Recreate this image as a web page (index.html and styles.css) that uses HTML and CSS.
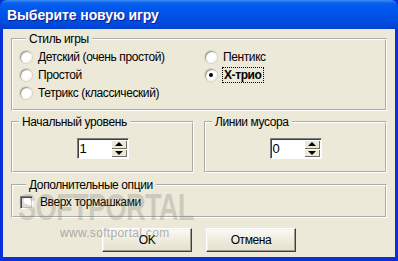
FILE: index.html
```html
<!DOCTYPE html>
<html lang="ru">
<head>
    <meta charset="UTF-8">
    <title>Выберите новую игру</title>
    <link rel="stylesheet" href="styles.css">
</head>
<body>
    <div class="window">
        <div class="titlebar">Выберите новую игру</div>
        <div class="client">
            <fieldset class="group style-group">
                <legend>Стиль игры</legend>
                <div class="styles">
                    <div class="col">
                        <div class="row"><span class="radio"></span>Детский (очень простой)</div>
                        <div class="row"><span class="radio"></span>Простой</div>
                        <div class="row"><span class="radio"></span>Тетрикс (классический)</div>
                    </div>
                    <div class="col">
                        <div class="row"><span class="radio"></span>Пентикс</div>
                        <div class="row"><span class="radio checked"></span><span class="focus">X-трио</span></div>
                    </div>
                </div>
            </fieldset>

            <div class="levels">
                <fieldset class="group level">
                    <legend>Начальный уровень</legend>
                    <div class="spin">
                        <span class="spin-value">1</span>
                        <span class="spin-btns">
                            <span class="spin-btn"><span class="arrow up"></span></span>
                            <span class="spin-btn"><span class="arrow down"></span></span>
                        </span>
                    </div>
                </fieldset>
                <fieldset class="group level">
                    <legend>Линии мусора</legend>
                    <div class="spin">
                        <span class="spin-value">0</span>
                        <span class="spin-btns">
                            <span class="spin-btn"><span class="arrow up"></span></span>
                            <span class="spin-btn"><span class="arrow down"></span></span>
                        </span>
                    </div>
                </fieldset>
            </div>

            <fieldset class="group options">
                <legend>Дополнительные опции</legend>
                <div class="row"><span class="checkbox"></span>Вверх тормашками</div>
            </fieldset>

            <div class="buttons">
                <button class="btn">OK</button>
                <button class="btn">Отмена</button>
            </div>
        </div>

        <!-- watermark from the screenshot -->
        <div class="watermark">
            <div class="wm-logo">SOFTPORTAL</div>
            <div class="wm-url">www.softportal.com</div>
        </div>
    </div>
</body>
</html>
```

FILE: styles.css
```css
body {
    margin: 0;
    font-family: "Liberation Sans", Arial, sans-serif;
    font-size: 12px;
    letter-spacing: -0.4px;
    color: #000;
}
.window {
    position: relative;
    width: 398px;
    height: 261px;
    box-sizing: border-box;
    display: flex;
    flex-direction: column;
    background: #0831d9;
    overflow: hidden;
}
.titlebar {
    height: 29px;
    flex: none;
    padding-left: 7px;
    font-size: 14px;
    font-weight: bold;
    letter-spacing: -0.1px;
    line-height: 31px;
    color: #fff;
    text-shadow: 1px 1px 0 #0a1f8f;
    background: linear-gradient(to bottom, #3d8ef7 0, #0a61ea 3px, #0058ee 7px, #0053e8 50%, #0049dc 85%, #003fcd 100%);
    border-radius: 7px 7px 0 0;
}
.client {
    flex: 1;
    margin: 0 3px 4px 3px;
    padding: 3px 8px 0 8px;
    background-color: #ece9d8;
    display: flex;
    flex-direction: column;
}
.group {
    margin: 0;
    padding: 0;
    min-width: 0;
    border: 2px groove #fff;
}
.group legend {
    margin-left: 6px;
    padding: 0 3px;
    line-height: 14px;
}
.style-group {
    padding: 2px 0 7px 7px;
}
.styles {
    display: flex;
}
.col:first-child {
    width: 185px;
}
.row {
    height: 18px;
    display: flex;
    align-items: center;
}
.radio {
    width: 12px;
    height: 12px;
    margin-right: 6px;
    border-radius: 50%;
    background: radial-gradient(circle at 60% 60%, #fff 40%, #e6e4dc 100%);
    box-shadow: inset 1px 1px 0 #9c9a92, inset -1px -1px 0 #f4f3ee, 0 0 0 1px #d6d3c6;
    display: flex;
    align-items: center;
    justify-content: center;
}
.radio.checked::after {
    content: "";
    width: 4px;
    height: 4px;
    border-radius: 50%;
    background: #000;
}
.focus {
    font-weight: bold;
    padding: 0 1px;
    outline: 1px dotted #000;
    line-height: 14px;
}
.levels {
    display: flex;
    gap: 10px;
    margin-top: 4px;
}
.level {
    flex: 1;
    padding: 9px 0 12px 0;
    display: flex;
    justify-content: center;
}
.spin {
    width: 52px;
    height: 21px;
    box-sizing: border-box;
    display: flex;
    background: #fff;
    border: 1px solid;
    border-color: #808080 #fff #fff #808080;
    box-shadow: inset 1px 1px 0 #404040;
    padding: 1px 1px 1px 2px;
}
.spin-value {
    flex: 1;
    line-height: 17px;
    font-size: 13px;
}
.spin-btns {
    width: 16px;
    display: flex;
    flex-direction: column;
}
.spin-btn {
    flex: 1;
    background: #ece9d8;
    box-shadow: inset 1px 1px 0 #fff, inset -1px -1px 0 #716f64;
    display: flex;
    align-items: center;
    justify-content: center;
}
.arrow {
    width: 0;
    height: 0;
    border-left: 4px solid transparent;
    border-right: 4px solid transparent;
}
.arrow.up {
    border-bottom: 4px solid #000;
}
.arrow.down {
    border-top: 4px solid #000;
}
.options {
    margin-top: 5px;
    padding: 1px 0 5px 7px;
}
.checkbox {
    width: 11px;
    height: 11px;
    margin-right: 7px;
    background: #fff;
    border: 1px solid;
    border-color: #808080 #fff #fff #808080;
    box-shadow: inset 1px 1px 0 #404040, inset -1px -1px 0 #d4d0c8;
}
.buttons {
    display: flex;
    justify-content: center;
    gap: 14px;
    margin-top: 10px;
}
.btn {
    width: 90px;
    height: 24px;
    font-family: inherit;
    font-size: 12px;
    letter-spacing: inherit;
    background: linear-gradient(to bottom, #fbfaf6, #ece9d8 60%, #e3e0d2);
    border: 1px solid;
    border-color: #fff #404040 #404040 #fff;
    box-shadow: inset -1px -1px 0 #9d9a8c, inset 1px 1px 0 #f4f2ea;
    padding: 0;
}
.watermark {
    position: absolute;
    left: 18px;
    top: 189px;
    pointer-events: none;
}
.wm-logo {
    font-size: 36px;
    font-weight: bold;
    letter-spacing: -1px;
    line-height: 38px;
    color: rgba(110, 110, 110, 0.26);
    transform: scaleX(0.76);
    transform-origin: left center;
}
.wm-url {
    margin-left: 42px;
    font-size: 12px;
    letter-spacing: 0.3px;
    line-height: 13px;
    color: rgba(110, 110, 110, 0.55);
}
```
